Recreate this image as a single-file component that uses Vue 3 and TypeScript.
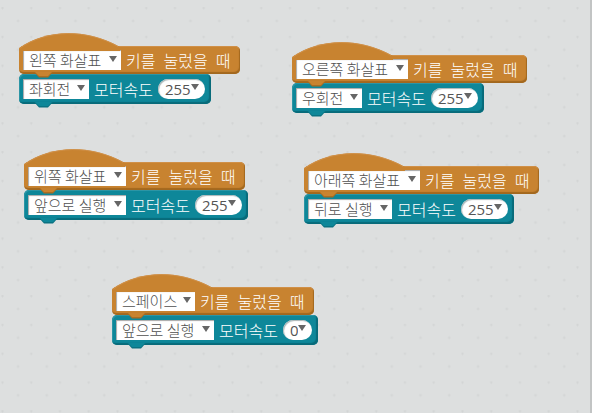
<script setup lang="ts">
import { reactive } from 'vue'

interface Script {
  x: number
  y: number
  key: string
  keyWidth: number
  action: string
  actionWidth: number
  speed: string
}

const keys = ['왼쪽 화살표', '오른쪽 화살표', '위쪽 화살표', '아래쪽 화살표', '스페이스']
const actions = ['앞으로 실행', '뒤로 실행', '좌회전', '우회전']
const eventWords = ['키를', '눌렀을', '때']

const scripts = reactive<Script[]>([
  { x: 19, y: 33, key: '왼쪽 화살표', keyWidth: 98, action: '좌회전', actionWidth: 66, speed: '255' },
  { x: 292, y: 42, key: '오른쪽 화살표', keyWidth: 112, action: '우회전', actionWidth: 66, speed: '255' },
  { x: 24, y: 149, key: '위쪽 화살표', keyWidth: 98, action: '앞으로 실행', actionWidth: 98, speed: '255' },
  { x: 304, y: 153, key: '아래쪽 화살표', keyWidth: 112, action: '뒤로 실행', actionWidth: 84, speed: '255' },
  { x: 112, y: 274, key: '스페이스', keyWidth: 79, action: '앞으로 실행', actionWidth: 98, speed: '0' },
])
</script>

<template>
  <main class="canvas">
    <svg class="grid" aria-hidden="true">
      <defs>
        <pattern id="marks" x="1" y="7" width="28.75" height="28.8" patternUnits="userSpaceOnUse">
          <path d="M0 1h3M1.500 -.5v3M15.500 14h3M17 12.500v3" stroke="#d3d5d5" stroke-width="1" />
        </pattern>
      </defs>
      <rect width="100%" height="100%" fill="url(#marks)" />
    </svg>

    <section v-for="(s, i) in scripts" :key="i" class="script" :style="{ left: s.x + 'px', top: s.y + 'px' }">
      <svg class="hat" width="102" height="18" viewBox="0 0 102 18" aria-hidden="true">
        <path d="M0 18V15C28 -4.500 68 -4.500 101 14V18Z" fill="#c88330" />
        <path d="M.5 15.500C28 -4 68 -4 99 13.500" fill="none" stroke="#d09048" />
      </svg>
      <div class="block event">
        <span class="field" :style="{ width: s.keyWidth + 'px' }">
          <select v-model="s.key" aria-label="키">
            <option v-for="k in keys" :key="k">{{ k }}</option>
          </select>
          <svg class="arrow" width="8" height="6" viewBox="0 0 8 6" aria-hidden="true"><path d="M0 0H8L4 6Z" /></svg>
        </span>
        <span class="words"><span v-for="w in eventWords" :key="w">{{ w }}</span></span>
        <svg class="notch" width="19" height="6" viewBox="0 0 19 6" aria-hidden="true">
          <path d="M0 0H19L14 5.500H5Z" fill="#a96d23" /><path d="M0 -1H19L14 4H5Z" fill="#c88330" />
        </svg>
      </div>
      <div class="block motor">
        <span class="field" :style="{ width: s.actionWidth + 'px' }">
          <select v-model="s.action" aria-label="동작">
            <option v-for="a in actions" :key="a">{{ a }}</option>
          </select>
          <svg class="arrow" width="8" height="6" viewBox="0 0 8 6" aria-hidden="true"><path d="M0 0H8L4 6Z" /></svg>
        </span>
        <label class="words" :for="'speed' + i">모터속도</label>
        <span class="pill">
          <input :id="'speed' + i" v-model="s.speed" type="text" inputmode="numeric" :style="{ width: s.speed.length + 'ch' }" />
          <button type="button" aria-label="속도 선택">
            <svg width="8" height="6" viewBox="0 0 8 6" aria-hidden="true"><path d="M0 0H8L4 6Z" /></svg>
          </button>
        </span>
        <svg class="notch" width="19" height="6" viewBox="0 0 19 6" aria-hidden="true">
          <path d="M0 0H19L14 5.500H5Z" fill="#0a7282" /><path d="M0 -1H19L14 4H5Z" fill="#0e8799" />
        </svg>
      </div>
    </section>
  </main>
</template>

<style>
body {
  margin: 0;
  background: #dddfdf;
}
</style>

<style scoped>
.canvas {
  position: relative;
  box-sizing: border-box;
  min-height: 100vh;
  overflow: hidden;
  background: #dddfdf;
  border-right: 2px solid #c2c4c4;
  font-family: "Noto Sans CJK KR", sans-serif;
}
.grid {
  position: absolute;
  inset: 0;
  width: 100%;
  height: 100%;
}
.script {
  position: absolute;
  display: flex;
  flex-direction: column;
  align-items: flex-start;
  padding-top: 13px;
}
.hat {
  position: absolute;
  top: 0;
  left: 0;
  z-index: 3;
}
.block {
  position: relative;
  display: flex;
  align-items: center;
  gap: 5px;
  border-radius: 5px;
  white-space: nowrap;
}
.event {
  z-index: 2;
  padding: 4px 10px 4px 4px;
  background: #c88330;
  box-shadow: inset -1px -2px 1px #a2681f, inset 0 1px 0 #d09048;
}
.motor {
  z-index: 1;
  padding: 5px 6px 5px 4px;
  background: #0e8799;
  box-shadow: inset -2px -2px 1px #086b7a, inset 1px 1px 0 #2c95a5;
}
.notch {
  position: absolute;
  top: calc(100% - 2px);
  left: 15px;
}
.field {
  position: relative;
  z-index: 4;
  display: flex;
  height: 20px;
}
.field select {
  appearance: none;
  width: 100%;
  height: 20px;
  margin: 0;
  padding: 0 0 0 6px;
  border: 0;
  border-radius: 0;
  background: #fff;
  box-shadow: inset 1px 1px 1px #a8a8a8;
  color: #505050;
  font-family: inherit;
  font-size: 15px;
  font-weight: 300;
  line-height: 20px;
}
.arrow {
  position: absolute;
  top: 6px;
  right: 4px;
  pointer-events: none;
}
.arrow path,
.pill path {
  fill: #666;
}
.words {
  display: flex;
  gap: 8px;
  color: #fff;
  font-size: 16px;
  font-weight: 300;
  line-height: 20px;
}
.pill {
  display: flex;
  align-items: flex-start;
  box-sizing: border-box;
  height: 20px;
  padding: 0 6px 0 7px;
  border-radius: 10px;
  background: #fff;
  box-shadow: inset 1px 1px 1px #a8b4b6;
}
.pill input {
  height: 20px;
  padding: 0;
  border: 0;
  outline: 0;
  background: none;
  color: #555;
  font-family: "Open Sans", sans-serif;
  font-size: 15px;
  line-height: 20px;
}
.pill button {
  display: flex;
  padding: 5px 0;
  border: 0;
  background: none;
}
</style>
